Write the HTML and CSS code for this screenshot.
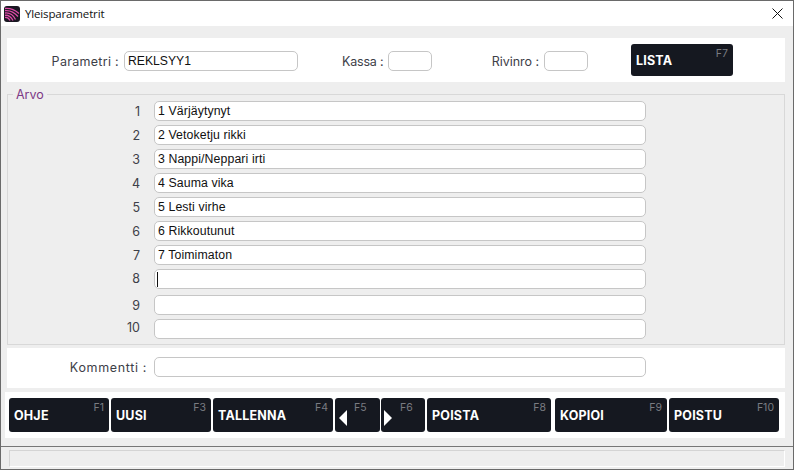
FILE: index.html
```html
<!DOCTYPE html>
<html lang="fi">
<head>
<meta charset="utf-8">
<title>Yleisparametrit</title>
<link rel="stylesheet" href="styles.css">
</head>
<body>
<div class="window">
  <header class="titlebar">
    <svg class="logo" width="16" height="16" viewBox="0 0 16 16">
      <rect width="16" height="16" rx="3" fill="#1a1722"/>
      <path d="M1 2.500C6 2 11 4 15 7.500M1 4.700C6 4 10.500 6.500 14 10.500M1 7C5.500 6.500 9 8.500 11.500 13.500M1 9.300C4.500 9 7 10.500 9 14.500M1 11.500C3 11.300 5 12.500 6 14.500" fill="none" stroke="#dd4aa8" stroke-width="1.300"/>
    </svg>
    <span class="title">Yleisparametrit</span>
    <svg class="close" width="11" height="11" viewBox="0 0 11 11">
      <path d="M.5.5l10 10M10.500.5l-10 10" stroke="#111" stroke-width="1" fill="none"/>
    </svg>
  </header>
  <main class="body">
    <section class="panel top">
      <label class="lbl lbl-par">Parametri :</label>
      <input class="field f-par" value="REKLSYY1">
      <label class="lbl lbl-kassa">Kassa :</label>
      <input class="field f-small">
      <label class="lbl lbl-rivi">Rivinro :</label>
      <input class="field f-small">
      <button class="btn b-lista"><span>LISTA</span><kbd>F7</kbd></button>
    </section>
    <fieldset class="arvo">
      <legend>Arvo</legend>
      <div class="row"><span class="num">1</span><input class="field wide" value="1 Värjäytynyt"></div>
      <div class="row"><span class="num">2</span><input class="field wide" value="2 Vetoketju rikki"></div>
      <div class="row"><span class="num">3</span><input class="field wide" value="3 Nappi/Neppari irti"></div>
      <div class="row"><span class="num">4</span><input class="field wide" value="4 Sauma vika"></div>
      <div class="row"><span class="num">5</span><input class="field wide" value="5 Lesti virhe"></div>
      <div class="row"><span class="num">6</span><input class="field wide" value="6 Rikkoutunut"></div>
      <div class="row"><span class="num">7</span><input class="field wide" value="7 Toimimaton"></div>
      <div class="row"><span class="num up1">8</span><div class="field wide caretbox"><i class="caret"></i></div></div>
      <div class="row gap6"><span class="num">9</span><input class="field wide"></div>
      <div class="row"><span class="num up2">10</span><input class="field wide"></div>
    </fieldset>
    <section class="panel comment">
      <label class="lbl lbl-kom">Kommentti :</label>
      <input class="field wide">
    </section>
    <nav class="panel toolbar">
      <button class="btn b1"><span>OHJE</span><kbd>F1</kbd></button>
      <button class="btn b1"><span>UUSI</span><kbd>F3</kbd></button>
      <button class="btn b2"><span>TALLENNA</span><kbd>F4</kbd></button>
      <button class="btn b3"><i class="tri left"></i><kbd class="mid">F5</kbd></button>
      <button class="btn b3 narrow"><i class="tri right"></i><kbd class="mid">F6</kbd></button>
      <button class="btn b4"><span>POISTA</span><kbd>F8</kbd></button>
      <button class="btn b5"><span>KOPIOI</span><kbd>F9</kbd></button>
      <button class="btn b6"><span>POISTU</span><kbd>F10</kbd></button>
    </nav>
  </main>
  <footer class="status"><div class="inset"></div></footer>
</div>
</body>
</html>
```
FILE: styles.css
```css
* { box-sizing: border-box; }
html, body { margin: 0; padding: 0; }
body { width: 794px; height: 470px; overflow: hidden; background: #eeeeee; }
.window {
  width: 794px; height: 470px;
  display: flex; flex-direction: column;
  border: 1px solid #6a6a6a;
  background: #eeeeee;
  font-family: Inter, "Liberation Sans", sans-serif;
}
.titlebar {
  height: 25px; flex: none;
  display: flex; align-items: center;
  background: #fff;
  padding: 0 10px 0 3px;
}
.logo { flex: none; }
.title {
  margin-left: 5px;
  font: 11.500px/16px "Open Sans", "Noto Sans", sans-serif;
  letter-spacing: -.15px;
  color: #111;
  flex: 1;
}
.body { flex: 1; padding: 12px 8px 0 6px; }
.panel { background: #fff; }
.top {
  height: 44px;
  padding-top: 2px;
  display: flex; align-items: center;
}
.lbl {
  font-size: 12.500px;
  color: #3d4048;
  white-space: nowrap;
  letter-spacing: .2px;
}
.lbl-par { margin-left: 44px; width: 68px; text-align: right; margin-right: 5px; letter-spacing: .3px; }
.lbl-kassa { margin-left: 44px; width: 41px; margin-right: 5px; text-align: right; letter-spacing: -.2px; }
.lbl-rivi { margin-left: 59px; width: 48px; margin-right: 5px; text-align: right; letter-spacing: -.05px; }
.field {
  display: block;
  height: 20px;
  border: 1px solid #c6c6c6;
  border-radius: 5px;
  background: #fff;
  padding: 0 3px;
  margin: 0;
  outline: none;
  font: 12.300px "Liberation Sans", Arial, sans-serif;
  letter-spacing: .1px;
  color: #111;
}
.f-par { width: 174px; font-size: 12.200px; letter-spacing: 0; }
.f-small { width: 44px; }
.wide { width: 492px; }
.btn {
  position: relative;
  display: block;
  height: 34px;
  padding: 0 0 0 5px;
  margin: 0;
  border: 0;
  border-radius: 3px;
  background: #151820;
  color: #fff;
  text-align: left;
  font: 700 12.500px Inter, "Liberation Sans", sans-serif;
}
.btn span { letter-spacing: .2px; }
.btn kbd {
  position: absolute; top: 3px; right: 5px;
  font: 400 10.500px Inter, "Liberation Sans", sans-serif;
  color: #7a7c82;
}
.btn kbd.mid { right: auto; left: 19px; }
.b-lista { width: 102px; height: 32px; margin: 0 0 2px 43px; }
.arvo {
  margin: 6px 0 0;
  padding: 0 0 5px 0;
  height: 257px;
  border: 1px solid #d8d8d8;
  min-width: 0;
}
.arvo legend {
  margin-left: 5px;
  padding: 0 3px;
  font-size: 12.500px;
  line-height: 13px;
  color: #7d3a86;
}
.row { display: flex; align-items: center; margin-bottom: 4px; }
.row.gap6 { margin-top: 6px; }
.num {
  width: 132px;
  margin-right: 14px;
  text-align: right;
  font-size: 12.500px;
  color: #3d4048;
}
.num.up1 { margin-bottom: 2px; }
.num.up2 { margin-bottom: 4px; }
.caretbox { display: flex; align-items: center; padding-left: 2px; }
.caret { display: block; width: 1px; height: 15px; background: #111; }
.comment {
  height: 40px; margin-top: 3px;
  display: flex; align-items: center;
  padding-bottom: 2px;
}
.lbl-kom { width: 140px; text-align: right; margin-right: 7px; letter-spacing: .65px; }
.toolbar {
  height: 46px; margin: 4px 0 0 -2px;
  display: flex; align-items: center;
  padding: 0 0 0 4px;
  gap: 2px;
}
.b1 { width: 100px; }
.b2 { width: 120px; }
.b3 { width: 45px; }
.b3.narrow { width: 44px; margin-left: -1px; }
.b4 { width: 124px; }
.b5 { width: 112px; margin-left: 2px; }
.b6 { width: 110px; }
.tri { position: absolute; top: 12px; width: 0; height: 0; border-style: solid; border-color: transparent; border-width: 8px 0; }
.tri.left { left: 4px; border-right: 8px solid #fff; }
.tri.right { left: 3px; border-left: 8px solid #fff; }
.status {
  height: 23px; flex: none;
  border-top: 1px solid #777;
  padding: 3px 8px 2px 8px;
}
.inset {
  height: 17px;
  border: 1px solid #d4d4d4;
  border-right-color: #fff;
  border-bottom-color: #fff;
  background: #eee;
}
```
